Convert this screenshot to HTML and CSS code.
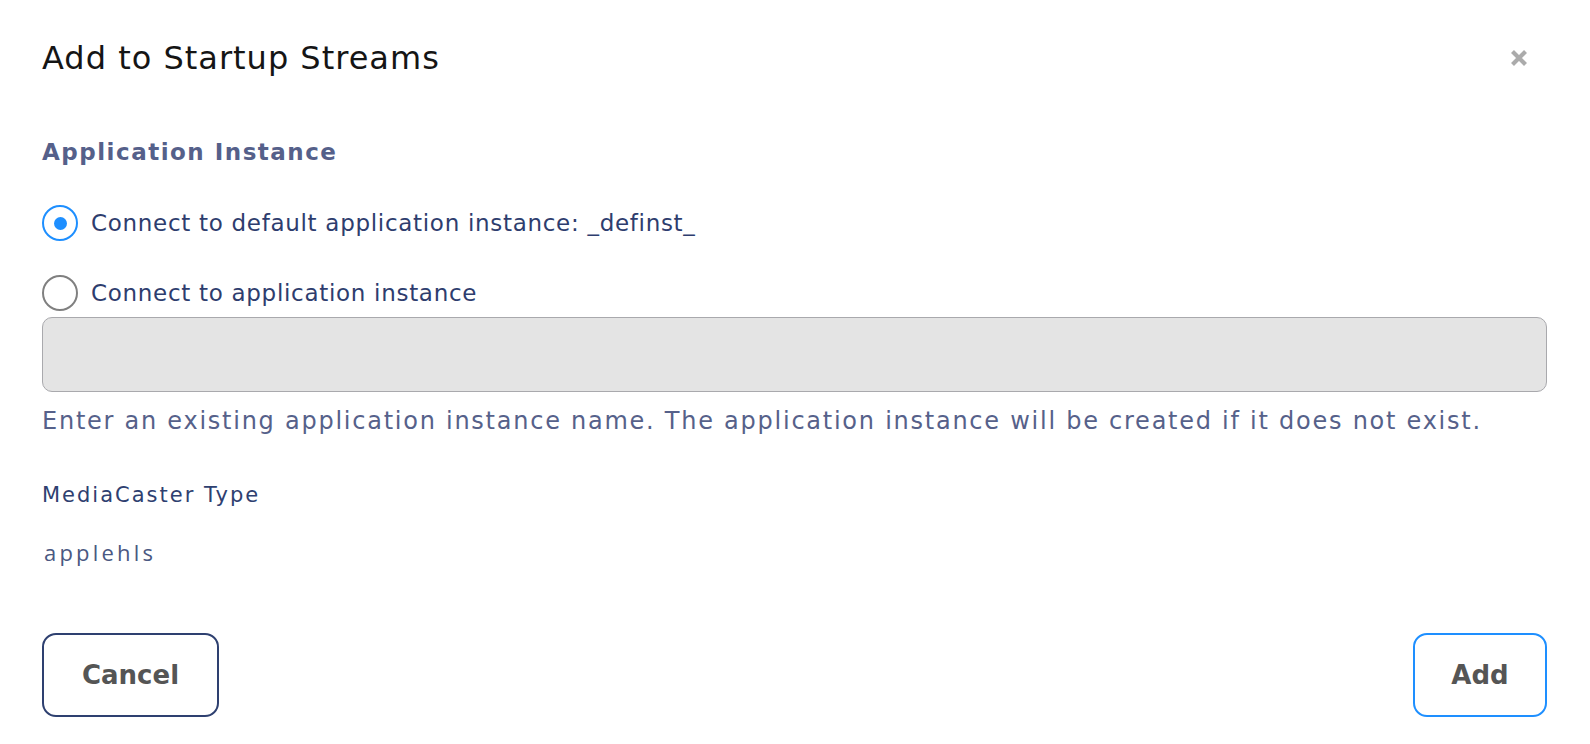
FILE: index.html
```html
<!DOCTYPE html>
<html>
<head>
<meta charset="utf-8">
<link rel="stylesheet" href="styles.css">
</head>
<body>
<div class="dialog">
  <div class="header">
    <h1 class="title">Add to Startup Streams</h1>
    <button class="close" aria-label="Close">
      <svg width="20" height="20" viewBox="0 0 20 20"><path d="M3.5 3.5 L16.5 16.5 M16.5 3.5 L3.5 16.5" stroke="#ababab" stroke-width="4.2" stroke-linecap="butt"/></svg>
    </button>
  </div>
  <h2 class="section">Application Instance</h2>
  <label class="radio-row">
    <span class="radio checked"><span class="dot"></span></span>
    <span class="radio-label">Connect to default application instance: _definst_</span>
  </label>
  <label class="radio-row second">
    <span class="radio"></span>
    <span class="radio-label">Connect to application instance</span>
  </label>
  <div class="input"></div>
  <p class="help">Enter an existing application instance name. The application instance will be created if it does not exist.</p>
  <div class="field-label">MediaCaster Type</div>
  <div class="field-value">applehls</div>
  <div class="actions">
    <button class="btn cancel">Cancel</button>
    <button class="btn add">Add</button>
  </div>
</div>
</body>
</html>
```
FILE: styles.css
```css
html, body {
  margin: 0;
  padding: 0;
  background: #ffffff;
}
.dialog {
  font-family: "DejaVu Sans", sans-serif;
  padding: 0 43px 0 42px;
  display: flex;
  flex-direction: column;
}
.header {
  display: flex;
  justify-content: space-between;
  align-items: center;
  height: 116px;
}
.title {
  margin: 0;
  font-weight: 400;
  font-size: 32px;
  line-height: 40px;
  color: #151515;
  letter-spacing: 1px;
}
.close {
  background: none;
  border: 0;
  padding: 0;
  margin-right: 18px;
  display: flex;
}
.section {
  margin: 21px 0 0;
  font-size: 23px;
  font-weight: 700;
  color: #55608a;
  line-height: 30px;
  letter-spacing: 1.5px;
}
.radio-row {
  display: flex;
  align-items: center;
  gap: 13px;
  margin-top: 38px;
  height: 36px;
}
.radio-row.second {
  margin-top: 34px;
}
.radio {
  box-sizing: border-box;
  width: 36px;
  height: 36px;
  border: 2px solid #808080;
  border-radius: 50%;
  display: flex;
  align-items: center;
  justify-content: center;
  flex: none;
}
.radio.checked {
  border-color: #1e8fff;
}
.dot {
  width: 13px;
  height: 13px;
  border-radius: 50%;
  background: #1e8fff;
}
.radio-label {
  font-size: 23px;
  line-height: 30px;
  letter-spacing: 0.7px;
  color: #2e3d6e;
}
.input {
  box-sizing: border-box;
  margin-top: 6px;
  height: 75px;
  background: #e4e4e4;
  border: 1.5px solid #a9a9ad;
  border-radius: 10px;
}
.help {
  margin: 13px 0 0;
  font-size: 24px;
  line-height: 32px;
  letter-spacing: 1.75px;
  color: #56618a;
}
.field-label {
  margin-top: 44px;
  font-size: 21px;
  line-height: 28px;
  letter-spacing: 2px;
  color: #2e4070;
}
.field-value {
  margin-top: 28px;
  padding-left: 2px;
  font-family: "Open Sans", sans-serif;
  font-size: 22px;
  line-height: 30px;
  letter-spacing: 3.2px;
  color: #4a5882;
}
.actions {
  margin-top: 66px;
  display: flex;
  justify-content: space-between;
}
.btn {
  box-sizing: border-box;
  background: #fff;
  border-radius: 14px;
  height: 84px;
  padding: 0;
  font-family: "DejaVu Sans", sans-serif;
  font-weight: 700;
  font-size: 26px;
  color: #555555;
}
.cancel {
  width: 177px;
  border: 2px solid #2e4070;
}
.add {
  width: 134px;
  border: 2px solid #1e8fff;
}
```
